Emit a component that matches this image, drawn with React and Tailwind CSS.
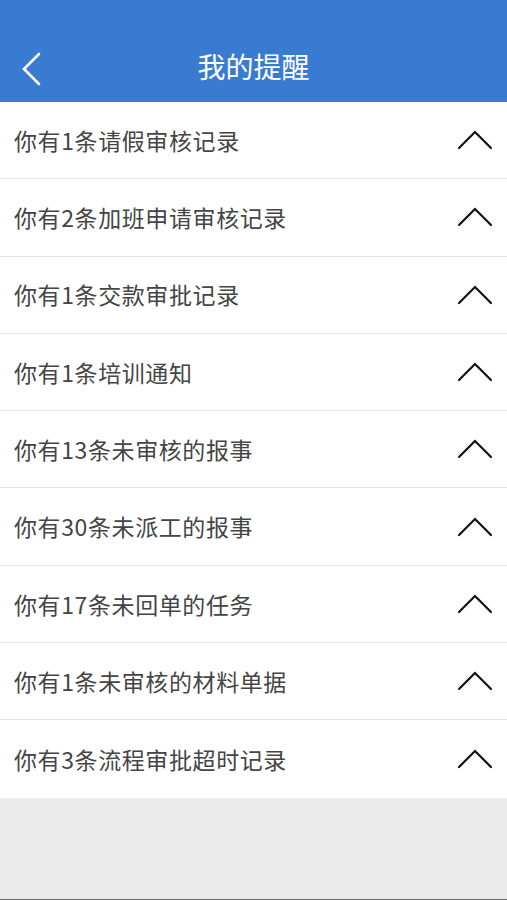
import React from 'react';

const items = [
  '你有1条请假审核记录',
  '你有2条加班申请审核记录',
  '你有1条交款审批记录',
  '你有1条培训通知',
  '你有13条未审核的报事',
  '你有30条未派工的报事',
  '你有17条未回单的任务',
  '你有1条未审核的材料单据',
  '你有3条流程审批超时记录',
];

function ChevronUp() {
  return (
    <svg width="36" height="20" viewBox="0 0 36 20" fill="none">
      <path d="M2 18 L18 2 L34 18" stroke="#111" strokeWidth="2.2" strokeLinecap="round" strokeLinejoin="miter" />
    </svg>
  );
}

function BackIcon() {
  return (
    <svg width="22" height="34" viewBox="0 0 22 34" fill="none">
      <path d="M18 2 L3 17 L18 32" stroke="#fff" strokeWidth="2.6" strokeLinecap="round" strokeLinejoin="miter" />
    </svg>
  );
}

export default function App() {
  return (
    <div
      className="flex min-h-[900px] w-full flex-col bg-[#ebebeb]"
      style={{ fontFamily: '"Noto Sans CJK SC", "Noto Sans", sans-serif' }}
    >
      <header className="relative flex h-[102px] shrink-0 items-end justify-center bg-[#3a7bd2] pb-[16px]">
        <button type="button" className="absolute left-[21px] top-[52px]">
          <BackIcon />
        </button>
        <h1 className="text-[28px] leading-[40px] text-white">我的提醒</h1>
      </header>

      <ul className="bg-white">
        {items.map((text, i) => (
          <li
            key={i}
            className={
              'flex h-[77.3px] items-center justify-between pl-[14px] pr-[14px] ' +
              (i < items.length - 1 ? 'border-b border-[#e4e4e4]' : '')
            }
          >
            <span className="text-[23px] tracking-[0.6px] text-[#454545]">{text}</span>
            <ChevronUp />
          </li>
        ))}
      </ul>

      <div className="flex-1" />
      <div className="h-[1px] bg-[#666]" />
    </div>
  );
}
